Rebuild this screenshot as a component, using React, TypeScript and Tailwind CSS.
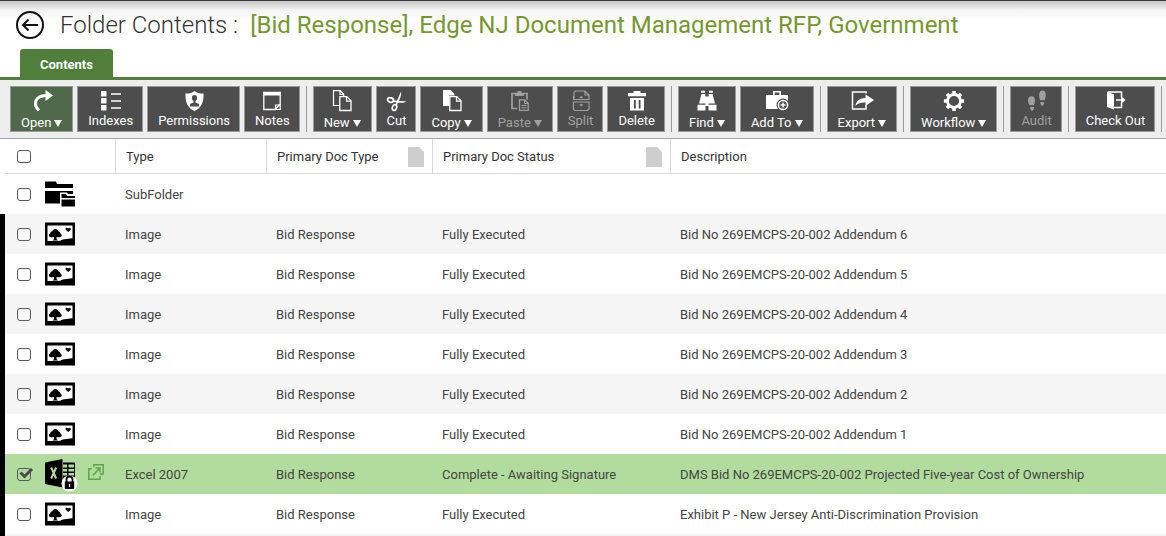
import { useState, type ReactNode } from 'react';

const icons: Record<string, ReactNode> = {
  open: (
    <>
      <path d="M9 20.500C2.500 14 5 6 16 5.500" fill="none" stroke="currentColor" strokeWidth="3" />
      <path d="M15.500 0L23 5.500l-7.500 5.500z" fill="currentColor" />
    </>
  ),
  indexes: (
    <>
      <path d="M2 1h5.500v5.500H2zM2 8h5.500v5.500H2zM2 15h5.500v5.500H2z" fill="currentColor" />
      <path d="M12 4h10M12 11h10M12 18h10" stroke="currentColor" strokeWidth="1.500" />
    </>
  ),
  permissions: (
    <>
      <path d="M12.500 1c3 2.200 6 2.800 9 2.500.4 8-2 14.500-9 17.500-7-3-9.400-9.500-9-17.500 3 .3 6-.3 9-2.500z" fill="currentColor" />
      <ellipse cx="12.500" cy="8" rx="2.600" ry="3" fill="#4d4d4d" />
      <path d="M11.500 10h2v2.500l3.500 1.500v2.500H8V14l3.500-1.500z" fill="#4d4d4d" />
    </>
  ),
  notes: (
    <>
      <path d="M3.800 2.500h16.400V14l-5 5.500H3.800z" fill="none" stroke="currentColor" strokeWidth="1.300" />
      <path d="M3.200 2h17.600v3.500H3.200z" fill="currentColor" />
      <path d="M15.500 19.500v-4.500h4.500M15.500 19.500l4.700-.2V14" fill="none" stroke="currentColor" strokeWidth="1.200" />
    </>
  ),
  new: (
    <>
      <path d="M9.500 15.500H3.500V.7h6.700l3.500 3.600v2M10 .7v3.800h3.700" fill="none" stroke="currentColor" strokeWidth="1.200" />
      <path d="M9.800 6.600h7l4.200 4.200v9.700H9.800zM16.500 6.600v4.500H21" fill="none" stroke="currentColor" strokeWidth="1.300" />
    </>
  ),
  copy: (
    <>
      <path d="M3 0h7.500l4 4v1.500H9V16H3z" fill="currentColor" />
      <path d="M9.800 6.600h7l4.200 4.200v9.700H9.800zM16.500 6.600v4.500H21" fill="none" stroke="currentColor" strokeWidth="1.300" />
    </>
  ),
  cut: (
    <>
      <g fill="none" stroke="currentColor" strokeWidth="1.700">
        <ellipse cx="5.500" cy="10" rx="3" ry="2.200" transform="rotate(15 5.500 10)" />
        <ellipse cx="9.500" cy="17.500" rx="2.100" ry="3" transform="rotate(18 9.500 17.500)" />
      </g>
      <path d="M8 10.200l13.500 1.400c-2.500 1.700-7 1.500-13.500.5zM10.200 15l5.700-13.200c1 3-1.200 7.500-4 13.500z" fill="currentColor" />
    </>
  ),
  paste: (
    <>
      <path d="M9 18.500H4V3.500h15v6" fill="none" stroke="currentColor" strokeWidth="1.700" />
      <path d="M7 6V3.300h2.500V1h4v2.300H16V6z" fill="currentColor" />
      <path d="M11.500 9.800h5.200l3.500 3.500v7h-8.700z" fill="#4d4d4d" stroke="currentColor" strokeWidth="1.300" />
      <path d="M16.500 10v3.500H20M13.500 15.500h5M13.500 17.800h5" stroke="currentColor" fill="none" />
    </>
  ),
  split: (
    <g fill="none" stroke="currentColor" strokeWidth="1.200">
      <path d="M5 8.500V2.500L6.500 1H16l4 4v4.500H4.500V6M16 1v4h4M4.500 12h15.500v7l-1.500 1.500h-13L4.500 19z" />
      <path d="M10.500 8l1.700-2.200L14 8zM10.500 14.300l1.700 2.200 1.800-2.200z" fill="currentColor" strokeWidth=".3" />
    </g>
  ),
  delete: (
    <path
      d="M3 3h5.500V1h7v2H21v3.300H3zM5 8h14v12.500H5zM9 10v8.500h1.800V10zM13.700 10v8.500h1.800V10z"
      fill="currentColor"
      fillRule="evenodd"
    />
  ),
  find: (
    <>
      <path d="M6 .8h4v2H6zM14 .8h4v2h-4zM6.500 4h3.800v2.500h3.400V4h3.800L20 13.500H4z" fill="currentColor" />
      <path d="M2.500 14.800h8v5.700h-8zM13.500 14.800h8v5.700h-8zM10.500 13h3v3h-3z" fill="currentColor" />
    </>
  ),
  addTo: (
    <>
      <path d="M1 5h7V1h8v4h7v14H1zM9.700 2.500V5h4.600V2.500z" fill="currentColor" fillRule="evenodd" />
      <circle cx="18" cy="15" r="6.500" fill="#4d4d4d" />
      <circle cx="18" cy="15" r="4.600" fill="none" stroke="currentColor" strokeWidth="1.500" />
      <path d="M15.500 15h5M18 12.500v5" stroke="currentColor" strokeWidth="1.500" />
    </>
  ),
  export: (
    <>
      <path d="M16 3.500V2H2.500v17H16v-4" fill="none" stroke="currentColor" strokeWidth="1.500" />
      <path d="M15.500 4.500L24 10l-8.500 6v-3.500c-4-.2-7.500.5-10 3.500.5-5 4-8 10-8z" fill="currentColor" />
    </>
  ),
  workflow: (
    <>
      <circle cx="12" cy="11" r="6.500" fill="none" stroke="currentColor" strokeWidth="2.800" />
      <path
        d="M12 .9v4M12 17.100v4M1.900 11h4M18.100 11h4M4.900 3.900l2.700 2.700M16.400 15.400l2.700 2.700M4.900 18.100l2.700-2.700M16.400 6.600l2.700-2.700"
        stroke="currentColor"
        strokeWidth="3.600"
      />
    </>
  ),
  audit: (
    <>
      <path d="M4.500 15.300C2 11.500 2.500 6.300 6.500 6.300c4 0 4 5 2.500 9zM5.200 17h3.800c0 5-3.800 5-3.800 0z" fill="currentColor" />
      <path d="M15 10c-1.500-4.500-1-9.500 2.500-9.500 4 0 4 5.500 2 9.700zM15.300 12l4 .2c-.5 4.700-4 4.500-4-.2z" fill="currentColor" />
    </>
  ),
  checkOut: (
    <>
      <path d="M5 2h13.500v5M18.500 13v4.500H11" fill="none" stroke="currentColor" strokeWidth="1.500" />
      <path d="M4 1.500l7 3v15l-7-2.500z" fill="currentColor" />
      <path d="M13 9.200h5V6l4.500 4-4.500 4v-3.200h-5z" fill="currentColor" />
    </>
  ),
};

type Tool = { label: string; icon: string; menu?: boolean; disabled?: boolean; active?: boolean };

const groups: Tool[][] = [
  [
    { label: 'Open', icon: 'open', menu: true, active: true },
    { label: 'Indexes', icon: 'indexes' },
    { label: 'Permissions', icon: 'permissions' },
    { label: 'Notes', icon: 'notes' },
  ],
  [
    { label: 'New', icon: 'new', menu: true },
    { label: 'Cut', icon: 'cut' },
    { label: 'Copy', icon: 'copy', menu: true },
    { label: 'Paste', icon: 'paste', menu: true, disabled: true },
    { label: 'Split', icon: 'split', disabled: true },
    { label: 'Delete', icon: 'delete' },
  ],
  [
    { label: 'Find', icon: 'find', menu: true },
    { label: 'Add To', icon: 'addTo', menu: true },
  ],
  [{ label: 'Export', icon: 'export', menu: true }],
  [{ label: 'Workflow', icon: 'workflow', menu: true }],
  [{ label: 'Audit', icon: 'audit', disabled: true }],
  [{ label: 'Check Out', icon: 'checkOut' }],
];

function ToolButton({ label, icon, menu, disabled, active }: Tool) {
  return (
    <button
      type="button"
      disabled={disabled}
      className={`flex h-[46px] shrink-0 flex-col items-center border border-[#999] pl-[10px] pt-[3px] text-[13px] ${
        active ? 'bg-[#50694a]' : 'bg-[#4d4d4d]'
      } ${menu ? 'pr-[10px]' : 'pr-[9px]'} ${disabled ? 'text-[#a0a0a0]' : 'text-white'}`}
    >
      <svg viewBox="0 0 24 22" className="-mx-1 h-[22px] w-6 shrink-0" aria-hidden="true">
        {icons[icon]}
      </svg>
      <span className={`flex items-center gap-[3px] whitespace-nowrap leading-[18px] ${menu ? 'pt-[2px]' : ''}`}>
        {label}
        {menu && (
          <svg viewBox="0 0 8 7" className="h-[7px] w-2" aria-hidden="true">
            <path d="M0 0h8L4 7z" fill="currentColor" />
          </svg>
        )}
      </span>
    </button>
  );
}

function Checkbox({ label, checked, onChange }: { label: string; checked: boolean; onChange: (v: boolean) => void }) {
  return (
    <span className="relative flex">
      <input
        type="checkbox"
        aria-label={label}
        checked={checked}
        onChange={(e) => onChange(e.target.checked)}
        className="h-[13px] w-[14px] appearance-none rounded-[3px] border border-[#5a5a5a] bg-transparent"
      />
      {checked && (
        <svg viewBox="0 0 16 12" className="pointer-events-none absolute left-px top-0 h-3 w-4" aria-hidden="true">
          <path d="M2.500 4.500l4 4L14 1" fill="none" stroke="#4a4a4a" strokeWidth="3" />
        </svg>
      )}
    </span>
  );
}

function FolderIcon() {
  return (
    <svg viewBox="0 0 30 26" className="h-[26px] w-[30px]" aria-hidden="true">
      <path d="M0 .5h11l1 2.500h16v4H0zM0 10h28v12.500H0z" />
      <path d="M15 11.500h7l1 1.500h7v13H15z" fill="#fff" />
      <path d="M16.500 13h4.500l1 2h8v2H16.500zM16.500 18.500H30V25.500H16.500z" />
    </svg>
  );
}

function ImageIcon() {
  return (
    <svg viewBox="0 0 30 24" className="h-6 w-[30px]" aria-hidden="true">
      <path d="M0 .5h30v23H0z" />
      <path d="M2.500 3.500h25v12.800c-3.500 0-5 1-8 1-2.500 0-3.500 1.700-6 1.700h-11z" fill="#fff" />
      <path d="M10.300 7c1.700 0 2.700 1 2.900 2.300 1.500.3 2 1 2 2 1 .5 1.700 1.500 1.500 2.600-.7 1.400-3.200 1.600-5.200 1l.2 2.400 1.300 1.200H7.600l1.300-1.200.2-2.400c-2 .6-4.500.4-5.200-1-.2-1.100.5-2.100 1.500-2.600 0-1 .5-1.700 2-2 .2-1.300 1.200-2.300 2.900-2.300zM23.200 10l-2.500-2.300c-.5-2 1.700-2.500 2.500-1.100.8-1.400 3-.9 2.500 1.100z" />
    </svg>
  );
}

function ExcelIcon() {
  return (
    <svg viewBox="0 0 34 34" className="h-[34px] w-[34px]" aria-hidden="true">
      <path d="M0 4.500L17.500 1v28.500L0 26z" />
      <path d="M18 4.500h12v20H18z" />
      <path d="M18 6.500h4v3h-4zM23.500 6.500H29v3h-5.500zM18 11h4v2.500h-4zM23.500 11H29v2.500h-5.500zM18 15h4v2.500h-4zM23.500 15H29v2.500h-5.500z" fill="#b2dc9e" />
      <path d="M6.200 9.500l5 11M11.200 9.500l-5 11" stroke="#b2dc9e" strokeWidth="2" />
      <circle cx="24.500" cy="25.500" r="8" fill="#fff" />
      <path d="M21.500 25v-3.500c0-4 6-4 6 0V25" fill="none" stroke="#000" strokeWidth="1.800" />
      <path d="M19.800 23.500h9.400v7.500h-9.400z" />
      <path d="M24.500 26v2.800" stroke="#fff" strokeWidth="1.300" />
    </svg>
  );
}

function PopOutIcon() {
  return (
    <svg viewBox="0 0 16 16" className="size-4" fill="none" stroke="#5fa548" strokeWidth="1.500" aria-hidden="true">
      <path d="M4 4.800H.8v10.400H12V12M5.800 3V.8h9.400V10H12M4.800 11.500l7-7.500M7.500 4h4.500v4.500" />
    </svg>
  );
}

function PageIcon() {
  return (
    <svg viewBox="0 0 16 20" className="h-5 w-4" aria-hidden="true">
      <path d="M0 0h11l5 5v15H0z" fill="#cecece" />
    </svg>
  );
}

type Row = { kind: 'folder' | 'image' | 'excel'; type: string; doc?: string; status?: string; description?: string };

const addenda: Row[] = [6, 5, 4, 3, 2, 1].map((n) => ({
  kind: 'image',
  type: 'Image',
  doc: 'Bid Response',
  status: 'Fully Executed',
  description: `Bid No 269EMCPS-20-002 Addendum ${n}`,
}));

const rows: Row[] = [
  { kind: 'folder', type: 'SubFolder' },
  ...addenda,
  {
    kind: 'excel',
    type: 'Excel 2007',
    doc: 'Bid Response',
    status: 'Complete - Awaiting Signature',
    description: 'DMS Bid No 269EMCPS-20-002 Projected Five-year Cost of Ownership',
  },
  {
    kind: 'image',
    type: 'Image',
    doc: 'Bid Response',
    status: 'Fully Executed',
    description: 'Exhibit P - New Jersey Anti-Discrimination Provision',
  },
];

const headCell = 'border-l border-b border-[#d8d8d8] pl-[10px] pr-2 pt-px text-left font-normal text-[#333]';
const bodyCell = 'px-[10px] pt-[2px]';

export default function App() {
  const [selected, setSelected] = useState<number[]>([7]);
  const toggle = (i: number, on: boolean) => setSelected((s) => (on ? [...s, i] : s.filter((n) => n !== i)));

  return (
    <div className="h-screen overflow-hidden bg-white font-['Roboto',sans-serif] text-[13px] text-[#444]">
      <header className="border-t border-[#3a363a] bg-[linear-gradient(to_bottom,#c9c7c9_0px,#f2f2f2_9px,#ffffff_19px)]">
        <div className="flex h-12 items-center gap-4 pl-4">
          <button type="button" aria-label="Back" className="shrink-0">
            <svg viewBox="0 0 28 28" className="size-7" fill="none" stroke="#111" strokeWidth="2" aria-hidden="true">
              <circle cx="14" cy="14" r="13" />
              <path d="M22 14H7M12.500 8.500L7 14l5.500 5.500" />
            </svg>
          </button>
          <h1 className="flex gap-3 whitespace-nowrap text-2xl font-light text-[#333]">
            <span>Folder Contents :</span>
            <span className="font-normal text-[#76972f]">
              [Bid Response], Edge NJ Document Management RFP, Government
            </span>
          </h1>
        </div>
        <nav className="flex border-b-[3px] border-[#4f7f3b] pl-5">
          <a href="#contents" className="flex h-7 items-center rounded-t-[3px] bg-[#4f7f3b] px-5 pt-[3px] font-bold text-white">
            Contents
          </a>
        </nav>
      </header>

      <div className="flex gap-[6px] overflow-hidden border-b border-[#a8a8a8] bg-[#eeeeee] pb-[6px] pl-[10px] pt-[6px]" role="toolbar">
        {groups.map((g, i) => (
          <div key={i} className="flex shrink-0 gap-[6px]">
            <div className="flex gap-1">
              {g.map((t) => (
                <ToolButton key={t.label} {...t} />
              ))}
            </div>
            <div className="w-px bg-[#999]" />
          </div>
        ))}
      </div>

      <table className="w-full table-fixed border-separate border-spacing-0">
        <colgroup>
          <col className="w-[5px]" />
          <col className="w-10" />
          <col className="w-[70px]" />
          <col className="w-[151px]" />
          <col className="w-[166px]" />
          <col className="w-[238px]" />
          <col />
        </colgroup>
        <thead>
          <tr className="h-[35px]">
            <th />
            <th className="border-b border-[#d8d8d8] pl-3">
              <Checkbox
                label="Select all"
                checked={selected.length === rows.length}
                onChange={(on) => setSelected(on ? rows.map((_, i) => i) : [])}
              />
            </th>
            <th className="border-b border-[#d8d8d8]" />
            <th className={headCell}>Type</th>
            <th className={headCell}>
              <span className="flex items-center justify-between">
                Primary Doc Type
                <PageIcon />
              </span>
            </th>
            <th className={headCell}>
              <span className="flex items-center justify-between">
                Primary Doc Status
                <PageIcon />
              </span>
            </th>
            <th className={headCell}>Description</th>
          </tr>
        </thead>
        <tbody>
          {rows.map((r, i) => (
            <tr
              key={i}
              className={`h-10 ${selected.includes(i) ? 'bg-[#b2dc9e]' : i % 2 ? 'bg-[#f5f5f5]' : 'bg-white'}`}
            >
              <td className={i > 0 ? 'bg-black' : ''} />
              <td className="pl-3">
                <Checkbox
                  label={r.description ?? r.type}
                  checked={selected.includes(i)}
                  onChange={(on) => toggle(i, on)}
                />
              </td>
              <td>
                {r.kind === 'folder' && <FolderIcon />}
                {r.kind === 'image' && <ImageIcon />}
                {r.kind === 'excel' && (
                  <div className="flex h-10 items-start gap-[9px]">
                    <div className="pt-1">
                      <ExcelIcon />
                    </div>
                    <a href="#open" aria-label="Open in new window" className="pt-[10px]">
                      <PopOutIcon />
                    </a>
                  </div>
                )}
              </td>
              <td className={bodyCell}>{r.type}</td>
              <td className={bodyCell}>{r.doc}</td>
              <td className={bodyCell}>{r.status}</td>
              <td className={bodyCell}>{r.description}</td>
            </tr>
          ))}
          <tr className="h-10 bg-[#f5f5f5]">
            <td className="bg-black" />
            <td colSpan={6} />
          </tr>
        </tbody>
      </table>
    </div>
  );
}
